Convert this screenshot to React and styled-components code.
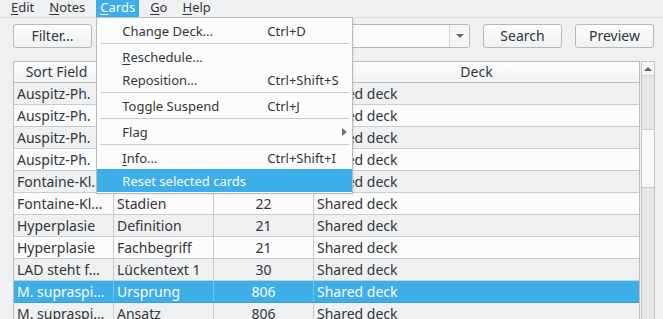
import React from "react";
import styled, { createGlobalStyle } from "styled-components";

const GlobalStyle = createGlobalStyle`
  html, body {
    margin: 0;
    padding: 0;
    background: #eff0f1;
  }
  body {
    font-family: "Noto Sans", "DejaVu Sans", sans-serif;
    color: #31363b;
    overflow: hidden;
  }
`;

const Window = styled.div`
  width: 663px;
  height: 319px;
  display: flex;
  flex-direction: column;
  overflow: hidden;
  background: #eff0f1;
`;

const MenuBar = styled.div`
  display: flex;
  gap: 7px;
  height: 17px;
  padding-left: 7px;
  border-bottom: 1px solid #dcdddf;
  font-size: 13px;
`;

const MenuTitle = styled.div`
  position: relative;
  height: 17px;
  padding: 0 4px;
  line-height: 15px;
  background: ${(p) => (p.$open ? "#3daee9" : "transparent")};
  color: ${(p) => (p.$open ? "#fcfcfc" : "#31363b")};
`;

const U = styled.span`
  text-decoration: underline;
  text-underline-offset: 2px;
`;

const Dropdown = styled.div`
  position: absolute;
  top: 100%;
  left: 0;
  z-index: 20;
  width: 255px;
  padding: 1px 0;
  background: #fcfcfc;
  border: 1px solid #b9bbbd;
  box-shadow: 1px 1px 2px rgba(0, 0, 0, 0.08);
  color: #31363b;
`;

const Item = styled.div`
  display: flex;
  align-items: center;
  height: 23px;
  box-sizing: border-box;
  padding: 1px 0 0 25px;
  line-height: 22px;
  white-space: nowrap;
  background: ${(p) => (p.$active ? "#3daee9" : "transparent")};
  color: ${(p) => (p.$active ? "#fcfcfc" : "#31363b")};
`;

const Label = styled.span`
  width: 145px;
`;

const Shortcut = styled.span``;

const SubArrow = styled.span`
  margin-left: auto;
  margin-right: 5px;
  width: 0;
  height: 0;
  border-left: 5px solid #6e7175;
  border-top: 4.5px solid transparent;
  border-bottom: 4.5px solid transparent;
`;

const Separator = styled.div`
  height: 1px;
  margin: 1px 3px;
  background: #c9cbcd;
`;

const Toolbar = styled.div`
  display: flex;
  align-items: center;
  gap: 13px;
  height: 24px;
  padding: 6px 9px 0 13px;
`;

const Button = styled.button`
  width: 79px;
  height: 24px;
  box-sizing: border-box;
  padding: 0;
  border: 1px solid #b6b8ba;
  border-radius: 3px;
  background: linear-gradient(#fcfcfc, #f0f1f2);
  font-family: inherit;
  font-size: 14px;
  line-height: 22px;
  color: #31363b;
`;

const Combo = styled.div`
  flex: 1;
  height: 24px;
  box-sizing: border-box;
  display: flex;
  justify-content: flex-end;
  border: 1px solid #b6b8ba;
  border-radius: 3px;
  background: #fcfcfc;
`;

const ComboButton = styled.div`
  width: 19px;
  display: flex;
  align-items: center;
  justify-content: center;
  border-left: 1px solid #d3d5d7;
  background: #f4f5f5;
  border-radius: 0 3px 3px 0;
`;

const DownTri = styled.span`
  width: 0;
  height: 0;
  border-top: 4px solid #6a6d70;
  border-left: 4px solid transparent;
  border-right: 4px solid transparent;
`;

const UpTri = styled.span`
  width: 0;
  height: 0;
  border-bottom: 4px solid #5f6265;
  border-left: 4px solid transparent;
  border-right: 4px solid transparent;
`;

const Frame = styled.div`
  flex: 1;
  min-height: 0;
  display: flex;
  gap: 1px;
  margin: 13px 8px 0 13px;
`;

const TableArea = styled.div`
  flex: 1;
  display: flex;
  flex-direction: column;
  border: 1px solid #bcbec0;
  border-bottom: none;
  background: #fcfcfc;
  overflow: hidden;
  font-size: 14px;
`;

const cols = "100px 100px 100px 1fr";

const HeaderRow = styled.div`
  display: grid;
  grid-template-columns: ${cols};
  height: 21px;
  flex: none;
  box-sizing: border-box;
  border-bottom: 1px solid #bcbec0;
  background: linear-gradient(#fcfcfc, #f2f3f4);
`;

const HeaderCell = styled.div`
  line-height: 20px;
  text-align: center;
  padding-right: ${(p) => (p.$sorted ? "14px" : "0")};
  border-right: 1px solid #cfd1d3;
  white-space: nowrap;
  overflow: hidden;
  &:last-child {
    border-right: none;
  }
`;

const Row = styled.div`
  display: grid;
  grid-template-columns: ${cols};
  height: 22px;
  flex: none;
  box-sizing: border-box;
  border-bottom: 1px solid ${(p) => (p.$selected ? "#3a9fd4" : "#c9cbcd")};
  background: ${(p) =>
    p.$selected ? "#3daee9" : p.$alt ? "#eff0f1" : "#fcfcfc"};
  color: ${(p) => (p.$selected ? "#fcfcfc" : "#31363b")};
`;

const Cell = styled.div`
  padding: 0 3px;
  line-height: 21px;
  white-space: nowrap;
  overflow: hidden;
  text-align: ${(p) => (p.$center ? "center" : "left")};
  border-right: 1px solid
    ${(p) => (p.$selected ? "rgba(255,255,255,0.25)" : "#c9cbcd")};
  &:last-child {
    border-right: none;
  }
`;

const ScrollBar = styled.div`
  width: 14px;
  box-sizing: border-box;
  display: flex;
  flex-direction: column;
  border: 1px solid #c4c6c8;
  border-bottom: none;
  background: #e4e5e7;
`;

const ScrollUp = styled.div`
  height: 14px;
  flex: none;
  box-sizing: border-box;
  display: flex;
  align-items: center;
  justify-content: center;
  background: #f3f4f5;
  border-bottom: 1px solid #d2d4d6;
`;

const Thumb = styled.div`
  height: 59px;
  margin-top: 53px;
  box-sizing: border-box;
  background: #f8f9f9;
  border-top: 1px solid #c9cbcd;
  border-bottom: 1px solid #c9cbcd;
`;

const rows = [
  { sort: "Auspitz-Ph.", field: "Definition", due: "14", deck: "Shared deck" },
  { sort: "Auspitz-Ph.", field: "Ursache", due: "14", deck: "Shared deck" },
  { sort: "Auspitz-Ph.", field: "Vorkommen", due: "14", deck: "Shared deck" },
  { sort: "Auspitz-Ph.", field: "Fachbegriff", due: "14", deck: "Shared deck" },
  { sort: "Fontaine-Kl…", field: "Definition", due: "22", deck: "Shared deck" },
  { sort: "Fontaine-Kl…", field: "Stadien", due: "22", deck: "Shared deck" },
  { sort: "Hyperplasie", field: "Definition", due: "21", deck: "Shared deck" },
  { sort: "Hyperplasie", field: "Fachbegriff", due: "21", deck: "Shared deck" },
  { sort: "LAD steht f…", field: "Lückentext 1", due: "30", deck: "Shared deck" },
  { sort: "M. supraspi…", field: "Ursprung", due: "806", deck: "Shared deck", selected: true },
  { sort: "M. supraspi…", field: "Ansatz", due: "806", deck: "Shared deck" },
];

function CardsMenu() {
  return (
    <Dropdown>
      <Item>
        <Label>Change Deck...</Label>
        <Shortcut>Ctrl+D</Shortcut>
      </Item>
      <Separator />
      <Item>
        <Label><U>R</U>eschedule...</Label>
      </Item>
      <Item>
        <Label>Reposition...</Label>
        <Shortcut>Ctrl+Shift+S</Shortcut>
      </Item>
      <Separator />
      <Item>
        <Label>Toggle Suspend</Label>
        <Shortcut>Ctrl+J</Shortcut>
      </Item>
      <Separator />
      <Item>
        <Label>Flag</Label>
        <SubArrow />
      </Item>
      <Separator />
      <Item>
        <Label><U>I</U>nfo...</Label>
        <Shortcut>Ctrl+Shift+I</Shortcut>
      </Item>
      <Item $active>
        <Label>Reset selected cards</Label>
      </Item>
    </Dropdown>
  );
}

export default function App() {
  return (
    <>
      <GlobalStyle />
      <Window>
        <MenuBar>
          <MenuTitle><U>E</U>dit</MenuTitle>
          <MenuTitle><U>N</U>otes</MenuTitle>
          <MenuTitle $open>
            <U>C</U>ards
            <CardsMenu />
          </MenuTitle>
          <MenuTitle><U>G</U>o</MenuTitle>
          <MenuTitle><U>H</U>elp</MenuTitle>
        </MenuBar>

        <Toolbar>
          <Button>Filter...</Button>
          <Combo>
            <ComboButton>
              <DownTri />
            </ComboButton>
          </Combo>
          <Button>Search</Button>
          <Button>Preview</Button>
        </Toolbar>

        <Frame>
          <TableArea>
            <HeaderRow>
              <HeaderCell $sorted>Sort Field</HeaderCell>
              <HeaderCell>Card</HeaderCell>
              <HeaderCell>Due</HeaderCell>
              <HeaderCell>Deck</HeaderCell>
            </HeaderRow>
            {rows.map((r, i) => (
              <Row key={i} $alt={i % 2 === 0} $selected={r.selected}>
                <Cell $selected={r.selected}>{r.sort}</Cell>
                <Cell $selected={r.selected}>{r.field}</Cell>
                <Cell $selected={r.selected} $center>{r.due}</Cell>
                <Cell $selected={r.selected}>{r.deck}</Cell>
              </Row>
            ))}
          </TableArea>
          <ScrollBar>
            <ScrollUp>
              <UpTri />
            </ScrollUp>
            <Thumb />
          </ScrollBar>
        </Frame>
      </Window>
    </>
  );
}
